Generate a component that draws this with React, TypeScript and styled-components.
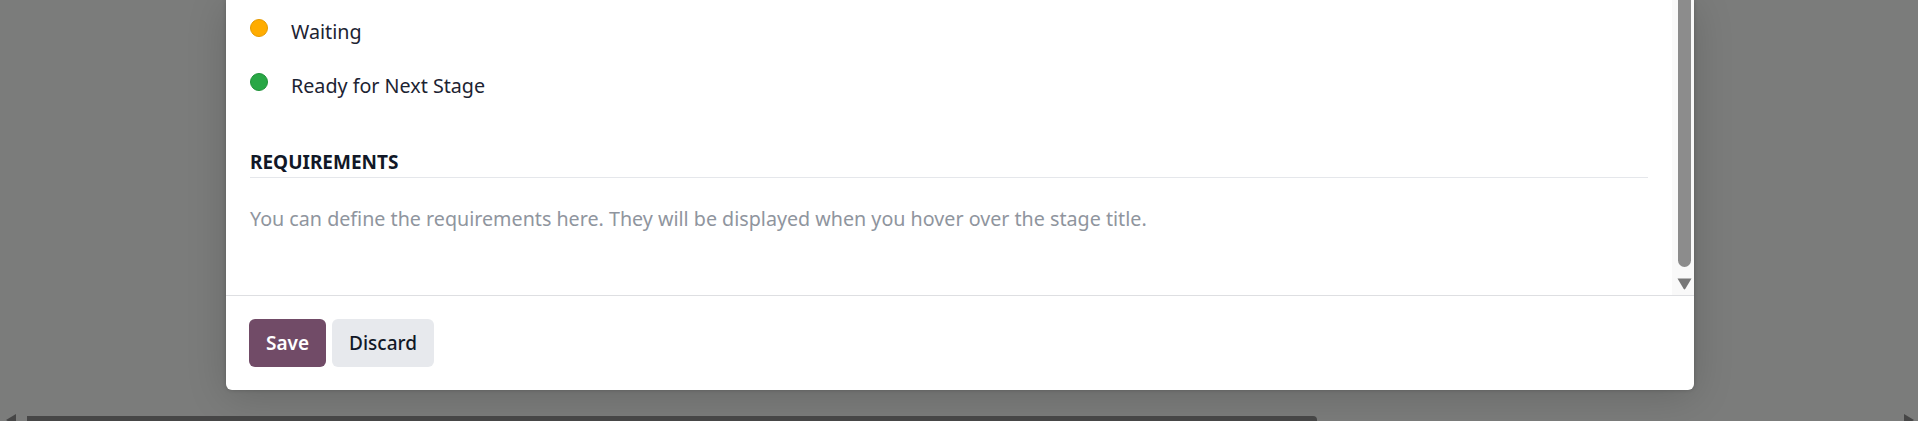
import React from "react";
import styled, { createGlobalStyle } from "styled-components";

const GlobalStyle = createGlobalStyle`
  html, body { margin: 0; padding: 0; }
  body {
    background: #7b7c7b;
    overflow: hidden;
    font-family: "Noto Sans", "Open Sans", sans-serif;
    -webkit-font-smoothing: antialiased;
  }
`;

const Screen = styled.div`
  position: relative;
  height: 421px;
  overflow: hidden;
  display: flex;
  align-items: flex-start;
  padding-left: 226px;
  box-sizing: border-box;
`;

const Modal = styled.div`
  width: 1468px;
  height: 390px;
  background: #ffffff;
  border-radius: 0 0 6px 6px;
  box-shadow: 0 6px 40px rgba(0, 0, 0, 0.16), 0 0 4px rgba(0, 0, 0, 0.18);
  display: flex;
  flex-direction: column;
  overflow: hidden;
`;

const Body = styled.div`
  height: 295px;
  display: flex;
  border-bottom: 1px solid #dedfe2;
  flex-shrink: 0;
`;

const Content = styled.div`
  flex: 1;
  padding: 18px 24px 0 24px;
  display: flex;
  flex-direction: column;
`;

const StatusRow = styled.div`
  display: flex;
  align-items: flex-start;
  height: 54px;
`;

const Dot = styled.span<{ $color: string; $border: string }>`
  width: 18px;
  height: 18px;
  box-sizing: border-box;
  border-radius: 50%;
  margin-top: 1px;
  background: ${(p) => p.$color};
  border: 1px solid ${(p) => p.$border};
  flex-shrink: 0;
`;

const StatusLabel = styled.span`
  margin-left: 23px;
  font-size: 19.7px;
  line-height: 28px;
  color: #1c2332;
`;

const SectionTitle = styled.div`
  margin-top: 22px;
  font-size: 19px;
  line-height: 28px;
  font-weight: 700;
  color: #111827;
  padding-bottom: 1px;
  border-bottom: 1px solid #e5e7eb;
`;

const Placeholder = styled.div`
  margin-top: 27px;
  font-size: 19.7px;
  line-height: 28px;
  color: #8f959e;
`;

const ScrollTrack = styled.div`
  width: 22px;
  flex-shrink: 0;
  background: #f9f9f9;
  display: flex;
  flex-direction: column;
  align-items: center;
`;

const ScrollThumb = styled.div`
  width: 13px;
  height: 267px;
  background: #8c8c8c;
  border-radius: 0 0 7px 7px;
  margin-left: 2px;
`;

const ScrollArrow = styled.svg`
  margin-top: 11px;
  margin-left: 2px;
  display: block;
`;

const Footer = styled.div`
  display: flex;
  gap: 6px;
  padding: 23px 23px;
`;

const Button = styled.button<{ $primary?: boolean }>`
  height: 48px;
  padding: 0 17px;
  border: none;
  border-radius: 6px;
  font-family: "Noto Sans", "Open Sans", sans-serif;
  font-size: 19px;
  font-weight: ${(p) => (p.$primary ? 600 : 500)};
  background: ${(p) => (p.$primary ? "#714b67" : "#e7e9ed")};
  color: ${(p) => (p.$primary ? "#ffffff" : "#111827")};
  cursor: pointer;
`;

const PageScrollbar = styled.div`
  position: absolute;
  left: 0;
  right: 0;
  top: 416px;
  height: 5px;
`;

const PageThumb = styled.div`
  position: absolute;
  left: 27px;
  top: 0;
  width: 1290px;
  height: 10px;
  background: #464646;
  border-radius: 0 4px 0 0;
`;

const ArrowSvg = styled.svg<{ $side: "left" | "right" }>`
  position: absolute;
  top: -2px;
  ${(p) => (p.$side === "left" ? "left: 4px;" : "right: 2px;")}
`;

export default function App() {
  return (
    <>
      <GlobalStyle />
      <Screen>
        <Modal>
          <Body>
            <Content>
              <StatusRow>
                <Dot $color="#ffac00" $border="#e59a00" />
                <StatusLabel>Waiting</StatusLabel>
              </StatusRow>
              <StatusRow>
                <Dot $color="#28a745" $border="#1f9239" />
                <StatusLabel>Ready for Next Stage</StatusLabel>
              </StatusRow>
              <SectionTitle>REQUIREMENTS</SectionTitle>
              <Placeholder>
                You can define the requirements here. They will be displayed when you hover over the stage title.
              </Placeholder>
            </Content>
            <ScrollTrack>
              <ScrollThumb />
              <ScrollArrow width="15" height="12" viewBox="0 0 15 12">
                <path d="M0.5 0.5 H14.5 L8.4 10.8 Q7.5 12 6.6 10.8 Z" fill="#777777" />
              </ScrollArrow>
            </ScrollTrack>
          </Body>
          <Footer>
            <Button $primary>Save</Button>
            <Button>Discard</Button>
          </Footer>
        </Modal>
        <PageScrollbar>
          <ArrowSvg $side="left" width="14" height="12" viewBox="0 0 14 12">
            <path d="M2 6 L12 0 L12 12 Z" fill="#464646" />
          </ArrowSvg>
          <PageThumb />
          <ArrowSvg $side="right" width="14" height="12" viewBox="0 0 14 12">
            <path d="M12 6 L2 0 L2 12 Z" fill="#464646" />
          </ArrowSvg>
        </PageScrollbar>
      </Screen>
    </>
  );
}
